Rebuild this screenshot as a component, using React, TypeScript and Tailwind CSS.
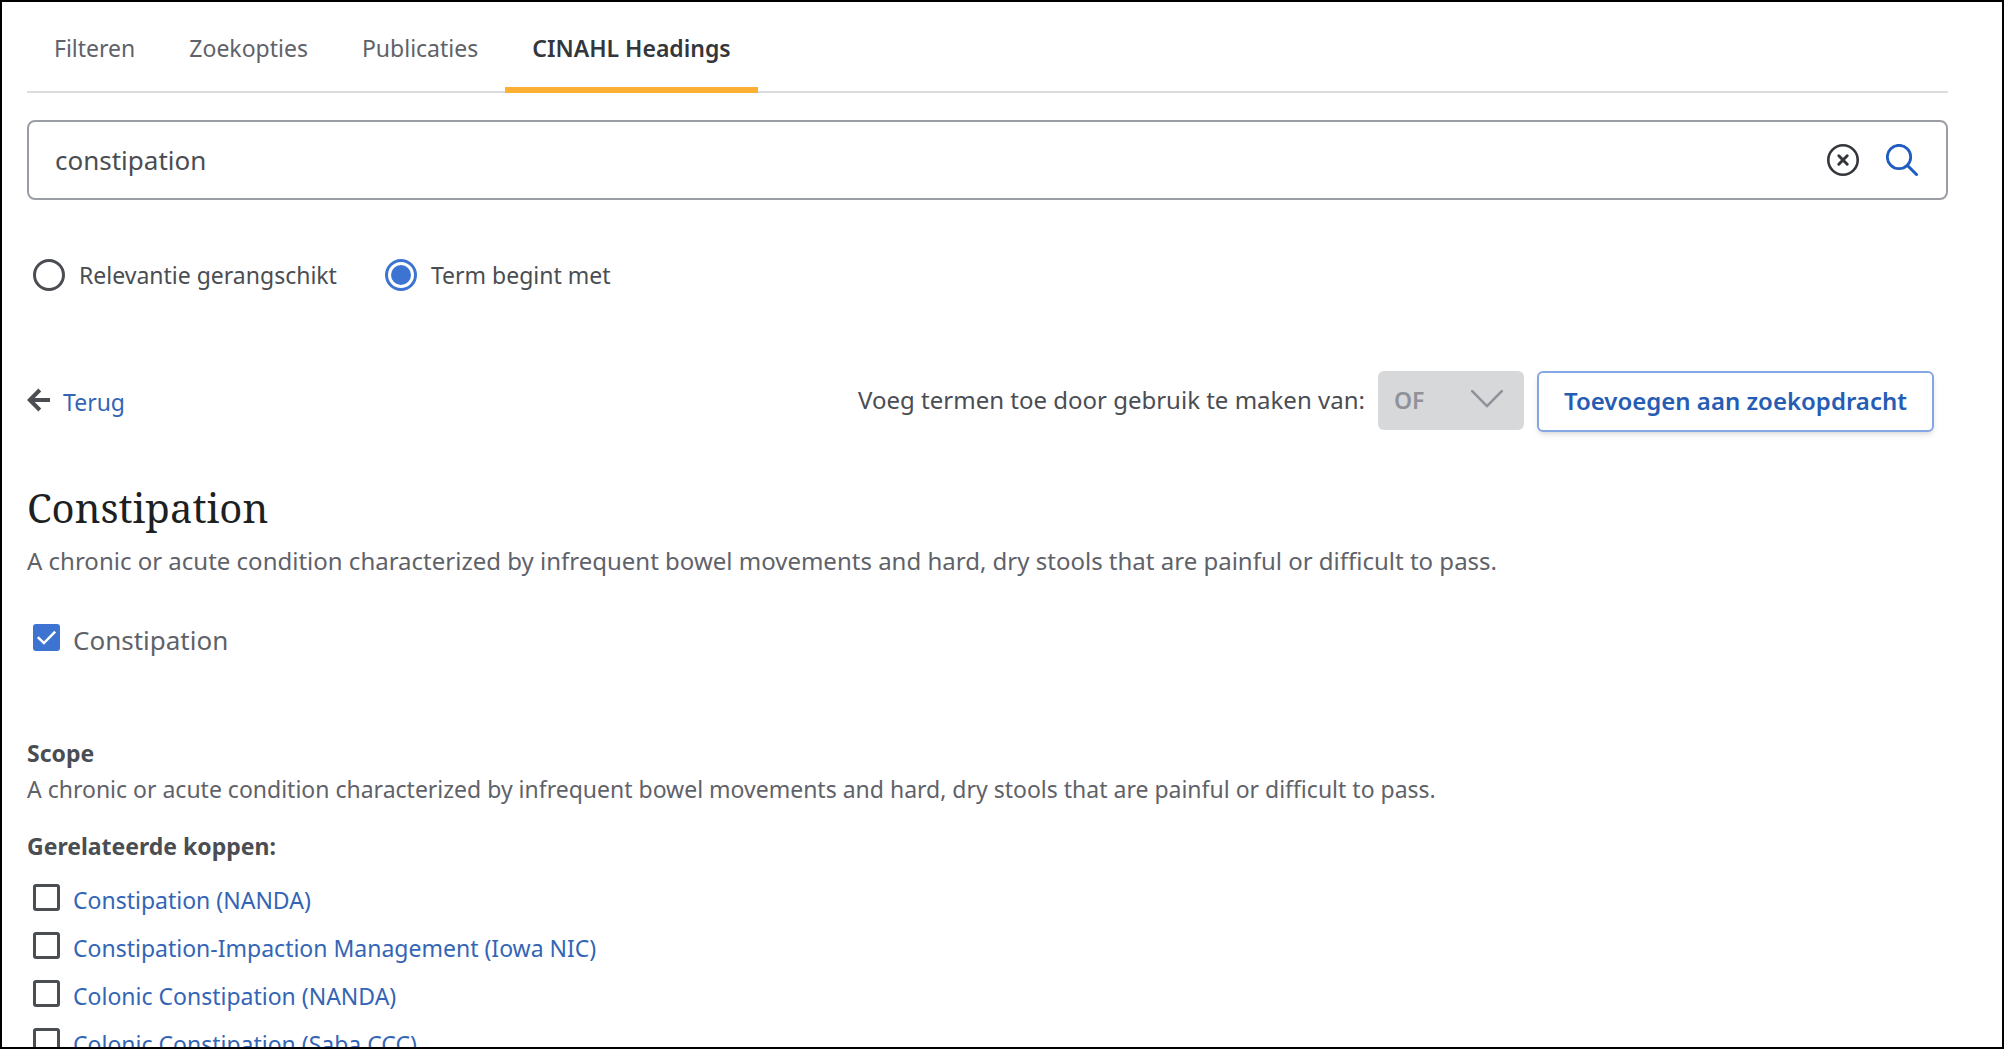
import { useState } from "react";

const tabs = ["Filteren", "Zoekopties", "Publicaties", "CINAHL Headings"];

const sortModes = [
  { id: "relevance", label: "Relevantie gerangschikt" },
  { id: "begins", label: "Term begint met" },
];

const related = [
  "Constipation (NANDA)",
  "Constipation-Impaction Management (Iowa NIC)",
  "Colonic Constipation (NANDA)",
  "Colonic Constipation (Saba CCC)",
];

const scopeNote =
  "A chronic or acute condition characterized by infrequent bowel movements and hard, dry stools that are painful or difficult to pass.";

function ClearIcon() {
  return (
    <svg viewBox="0 0 32 32" className="size-8" fill="none" stroke="currentColor" aria-hidden="true">
      <circle cx="16" cy="16" r="14.7" strokeWidth="2.6" />
      <path d="M11.8 11.8l8.4 8.4M20.2 11.8l-8.4 8.4" strokeWidth="3" strokeLinecap="round" />
    </svg>
  );
}

function SearchIcon() {
  return (
    <svg viewBox="0 0 32 32" className="size-8" fill="none" stroke="currentColor" aria-hidden="true">
      <circle cx="13" cy="13" r="11.7" strokeWidth="2.8" />
      <path d="M21.5 21.5l9 9" strokeWidth="3" strokeLinecap="round" />
    </svg>
  );
}

function BackIcon() {
  return (
    <svg viewBox="0 0 24 24" className="size-6" fill="none" stroke="currentColor" strokeWidth="4" aria-hidden="true">
      <path d="M23 12H3M12.8 2L2.8 12l10 10" />
    </svg>
  );
}

function Checkbox({ id, defaultChecked = false }: { id: string; defaultChecked?: boolean }) {
  return (
    <span className="mb-1.5 grid shrink-0">
      <input
        id={id}
        type="checkbox"
        defaultChecked={defaultChecked}
        className="peer col-start-1 row-start-1 size-[27px] appearance-none rounded-[3px] border-3 border-[#4a4d52] bg-white checked:border-[#3d74d1] checked:bg-[#3d74d1]"
      />
      <svg
        viewBox="0 0 28 28"
        className="pointer-events-none invisible col-start-1 row-start-1 size-[27px] peer-checked:visible"
        fill="none"
        stroke="white"
        strokeWidth="2.6"
        aria-hidden="true"
      >
        <path d="M5 13.5l6.3 6.3L23 8" />
      </svg>
    </span>
  );
}

export default function App() {
  const [query, setQuery] = useState("constipation");
  const [mode, setMode] = useState("begins");

  return (
    <main className="h-screen overflow-hidden border-2 border-black bg-white pr-[54px] pl-[25px] font-['Noto_Sans',sans-serif] text-[23px] leading-8 text-[#5f6269]">
      <nav className="flex border-b-2 border-[#dcdddf]">
        {tabs.map((tab) => (
          <button
            key={tab}
            type="button"
            aria-current={tab === "CINAHL Headings" ? "page" : undefined}
            className="-mb-0.5 border-b-6 border-transparent px-[27px] pt-[30px] pb-[23px] aria-[current=page]:border-[#fbb034] aria-[current=page]:font-semibold aria-[current=page]:text-[#33363b]"
          >
            {tab}
          </button>
        ))}
      </nav>

      <form
        className="mt-[27px] flex h-20 items-center gap-[27px] rounded-lg border-2 border-[#9b9ea4] px-7 pl-[26px]"
        onSubmit={(e) => e.preventDefault()}
      >
        <input
          type="text"
          aria-label="Zoekterm"
          value={query}
          onChange={(e) => setQuery(e.target.value)}
          className="min-w-0 flex-1 text-[26px] leading-9 text-[#4a4d52] outline-none"
        />
        <button type="button" aria-label="Wissen" className="text-[#33363b]" onClick={() => setQuery("")}>
          <ClearIcon />
        </button>
        <button type="submit" aria-label="Zoeken" className="text-[#1f5cc0]">
          <SearchIcon />
        </button>
      </form>

      <fieldset className="mt-[59px] flex gap-12 pl-1.5 text-[#4a4d52]">
        {sortModes.map((m) => (
          <label key={m.id} className="flex items-center gap-3.5">
            <input
              type="radio"
              name="mode"
              checked={mode === m.id}
              onChange={() => setMode(m.id)}
              className="size-8 appearance-none rounded-full border-3 border-[#4a4d52] bg-white bg-clip-content p-[3px] checked:border-[#3d74d1] checked:bg-[#3d74d1]"
            />
            {m.label}
          </label>
        ))}
      </fieldset>

      <div className="mt-20 flex items-center justify-between pr-3.5">
        <a href="#terug" className="flex items-center gap-3 text-[#3465b5]">
          <span className="mb-1 text-[#4a4d52]">
            <BackIcon />
          </span>
          Terug
        </a>
        <div className="flex items-start gap-[13px] text-2xl">
          <label htmlFor="operator" className="leading-[57px] text-[#4a4d52]">
            Voeg termen toe door gebruik te maken van:
          </label>
          <div className="grid items-center">
            <select
              id="operator"
              disabled
              className="col-start-1 row-start-1 h-[59px] w-[146px] appearance-none rounded-md bg-[#d7d8da] pl-4 text-[23px] font-semibold text-[#8f9299] opacity-100"
            >
              <option>OF</option>
            </select>
            <svg
              viewBox="0 0 32 18"
              className="pointer-events-none col-start-1 row-start-1 mr-[21px] mb-1 h-[18px] w-8 justify-self-end"
              fill="none"
              stroke="#8f9299"
              strokeWidth="2.6"
              strokeLinejoin="round"
              strokeLinecap="round"
              aria-hidden="true"
            >
              <path d="M1.2 1.2L16 16.2 30.8 1.2" />
            </svg>
          </div>
          <button
            type="button"
            className="h-[61px] rounded-md border-2 border-[#84a7e3] bg-white px-[25px] pb-0.5 font-semibold text-[#265cb3] shadow-md"
          >
            Toevoegen aan zoekopdracht
          </button>
        </div>
      </div>

      <h1 className="mt-12 font-['Noto_Serif',serif] text-[40px] leading-[56px] text-[#1d1f23]">Constipation</h1>
      <p className="mt-[9px] text-2xl">{scopeNote}</p>

      <div className="mt-[45px] flex items-center gap-[13px] pl-1.5">
        <Checkbox id="term" defaultChecked />
        <label htmlFor="term" className="text-[26px] leading-9">
          Constipation
        </label>
      </div>

      <section className="mt-[77px] leading-9">
        <h2 className="font-bold text-[#4a4d52]">Scope</h2>
        <p>{scopeNote}</p>
        <h2 className="mt-[21px] font-bold text-[#4a4d52]">Gerelateerde koppen:</h2>
        <ul className="mt-3">
          {related.map((name, i) => (
            <li key={name} className="flex h-12 items-center gap-[13px] pl-1.5">
              <Checkbox id={`related-${i}`} />
              <label htmlFor={`related-${i}`}>
                <a href={`#related-${i}`} className="text-[#3465b5]">
                  {name}
                </a>
              </label>
            </li>
          ))}
        </ul>
      </section>
    </main>
  );
}
